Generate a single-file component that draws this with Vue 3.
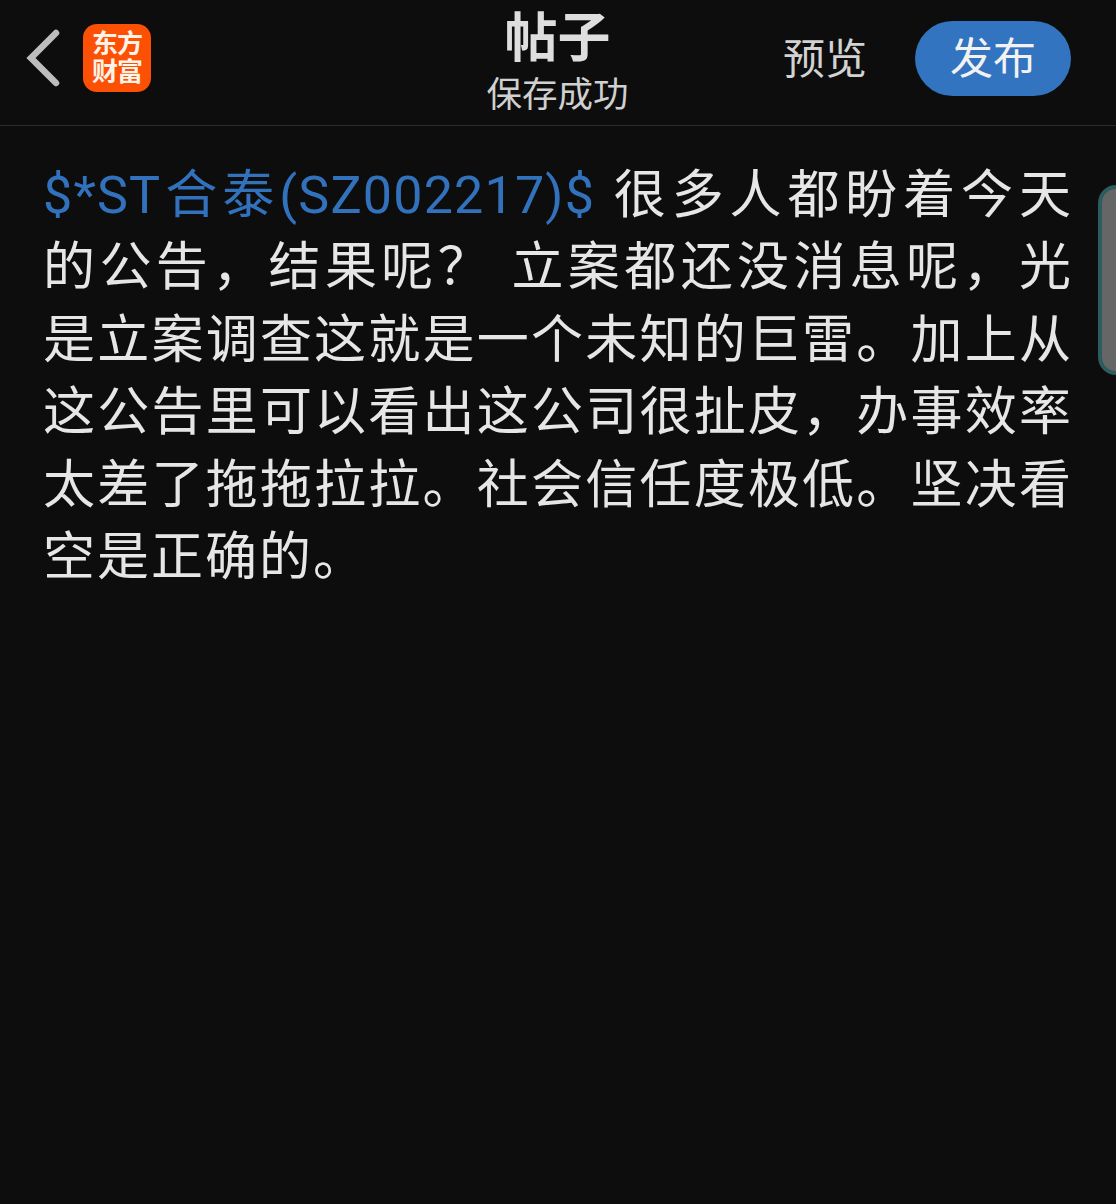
<template>
  <div class="page">
    <!-- 顶部栏 -->
    <header class="header">
      <div class="left">
        <svg class="back" width="36" height="58" viewBox="0 0 36 58">
          <path d="M30 4 L5 29 L30 54" fill="none" stroke="#bdbdbd" stroke-width="6.5" stroke-linecap="round" stroke-linejoin="miter" />
        </svg>
        <div class="logo">
          <span>东方</span>
          <span>财富</span>
        </div>
      </div>
      <div class="center">
        <div class="title">帖子</div>
        <div class="subtitle">保存成功</div>
      </div>
      <div class="right">
        <span class="preview">预览</span>
        <button class="publish">发布</button>
      </div>
    </header>

    <!-- 正文 -->
    <main class="content">
      <p class="post"><span class="stock">$*ST合泰(SZ002217)$</span> {{ body }}</p>
    </main>

    <!-- 右侧悬浮把手 -->
    <div class="handle"></div>
  </div>
</template>

<script setup>
const body = '很多人都盼着今天的公告，结果呢？ 立案都还没消息呢，光是立案调查这就是一个未知的巨雷。加上从这公告里可以看出这公司很扯皮，办事效率太差了拖拖拉拉。社会信任度极低。坚决看空是正确的。'
</script>

<style>
html, body {
  background: #0d0d0d;
}
</style>

<style scoped>
.page {
  position: relative;
  width: 1116px;
  height: 1204px;
  overflow: hidden;
  background: #0d0d0d;
  font-family: Roboto, "Noto Sans CJK SC", sans-serif;
}

.header {
  display: grid;
  grid-template-columns: 1fr auto 1fr;
  align-items: center;
  height: 126px;
  padding-bottom: 9px;
  box-sizing: border-box;
  border-bottom: 1px solid #2b2b2b;
}

.left {
  display: flex;
  align-items: center;
  padding-left: 26px;
  gap: 21px;
}

.logo {
  display: flex;
  flex-direction: column;
  align-items: center;
  justify-content: center;
  width: 68px;
  height: 68px;
  border-radius: 14px;
  background: #fc5005;
  color: #fff3e8;
  font-size: 26px;
  font-weight: 700;
  line-height: 28px;
  letter-spacing: -1px;
}

.center {
  display: flex;
  flex-direction: column;
  align-items: center;
  margin-left: -1px;
}

.title {
  font-size: 53px;
  font-weight: 700;
  line-height: 56px;
  color: #dedede;
  margin-top: 10px;
}

.subtitle {
  font-size: 35.5px;
  line-height: 42px;
  color: #d0d0d0;
  margin-top: 7px;
}

.right {
  display: flex;
  align-items: center;
  justify-content: flex-end;
  padding-right: 45px;
  gap: 48px;
}

.preview {
  font-size: 42px;
  color: #d2d2d2;
  margin-top: -6px;
}

.publish {
  width: 156px;
  height: 75px;
  border: none;
  border-radius: 38px;
  background: #3274c0;
  color: #f2f2f2;
  font-family: inherit;
  font-size: 43px;
  padding: 0 0 6px;
}

.content {
  padding: 34px 43px 0 43px;
}

.post {
  margin: 0;
  font-size: 52px;
  line-height: 72.4px;
  letter-spacing: 2px;
  color: #e6e6e6;
  text-align: justify;
}

.stock {
  color: #3272bd;
  letter-spacing: 1.2px;
}

.handle {
  position: absolute;
  top: 185px;
  left: 1098px;
  width: 40px;
  height: 190px;
  box-sizing: border-box;
  border: 4px solid #2c5c5e;
  border-radius: 18px;
  background: #666666;
}
</style>
